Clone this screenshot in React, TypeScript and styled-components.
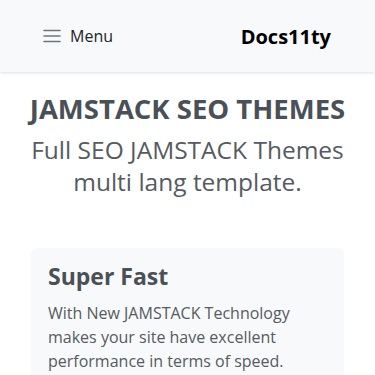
import * as React from "react";
import styled, { createGlobalStyle } from "styled-components";

const GlobalStyle = createGlobalStyle`
  html, body {
    margin: 0;
    padding: 0;
    background: #fff;
    font-family: "Open Sans", "Liberation Sans", sans-serif;
    color: #495057;
  }
`;

const Header = styled.header`
  height: 72px;
  background: #f8f9fa;
  box-shadow: 0 1px 3px rgba(0, 0, 0, 0.12);
  display: flex;
  align-items: center;
  justify-content: space-between;
  padding: 0 44px 0 43px;
`;

const MenuButton = styled.button`
  display: flex;
  align-items: center;
  gap: 9px;
  border: 0;
  background: transparent;
  padding: 0;
  font-family: inherit;
  font-size: 16px;
  color: #212529;
  cursor: pointer;
`;

const Brand = styled.a`
  font-size: 20px;
  font-weight: 700;
  color: #000;
  text-decoration: none;
`;

const Hero = styled.section`
  text-align: center;
  padding: 19px 12px 0;
`;

const Title = styled.h1`
  margin: 0 0 7px;
  font-size: 27.5px;
  font-weight: 700;
  line-height: 36px;
  color: #495057;
`;

const Lead = styled.p`
  margin: 0;
  font-size: 24.5px;
  font-weight: 400;
  line-height: 32px;
  color: #555b61;
`;

const Features = styled.div`
  padding: 50px 31px 0;
`;

const Card = styled.div`
  background: #f8f9fa;
  border-radius: 6px;
  padding: 12px 17px 16px;
`;

const CardTitle = styled.h2`
  margin: 0 0 9px;
  font-size: 23px;
  font-weight: 700;
  line-height: 32px;
  color: #495057;
`;

const CardText = styled.p`
  margin: 0;
  font-size: 16px;
  line-height: 24px;
  color: #555b61;
`;

const Hamburger = () => (
  <svg width="18" height="14" viewBox="0 0 18 14" fill="none">
    <path d="M1 1.5h16M1 7h16M1 12.5h16" stroke="#6c757d" strokeWidth="1.6" strokeLinecap="round" />
  </svg>
);

export default function App() {
  return (
    <>
      <GlobalStyle />
      <Header>
        <MenuButton>
          <Hamburger />
          Menu
        </MenuButton>
        <Brand href="#">Docs11ty</Brand>
      </Header>
      <Hero>
        <Title>JAMSTACK SEO THEMES</Title>
        <Lead>Full SEO JAMSTACK Themes multi lang template.</Lead>
      </Hero>
      <Features>
        <Card>
          <CardTitle>Super Fast</CardTitle>
          <CardText>
            With New JAMSTACK Technology makes your site have excellent performance in terms of speed.
          </CardText>
        </Card>
      </Features>
    </>
  );
}
